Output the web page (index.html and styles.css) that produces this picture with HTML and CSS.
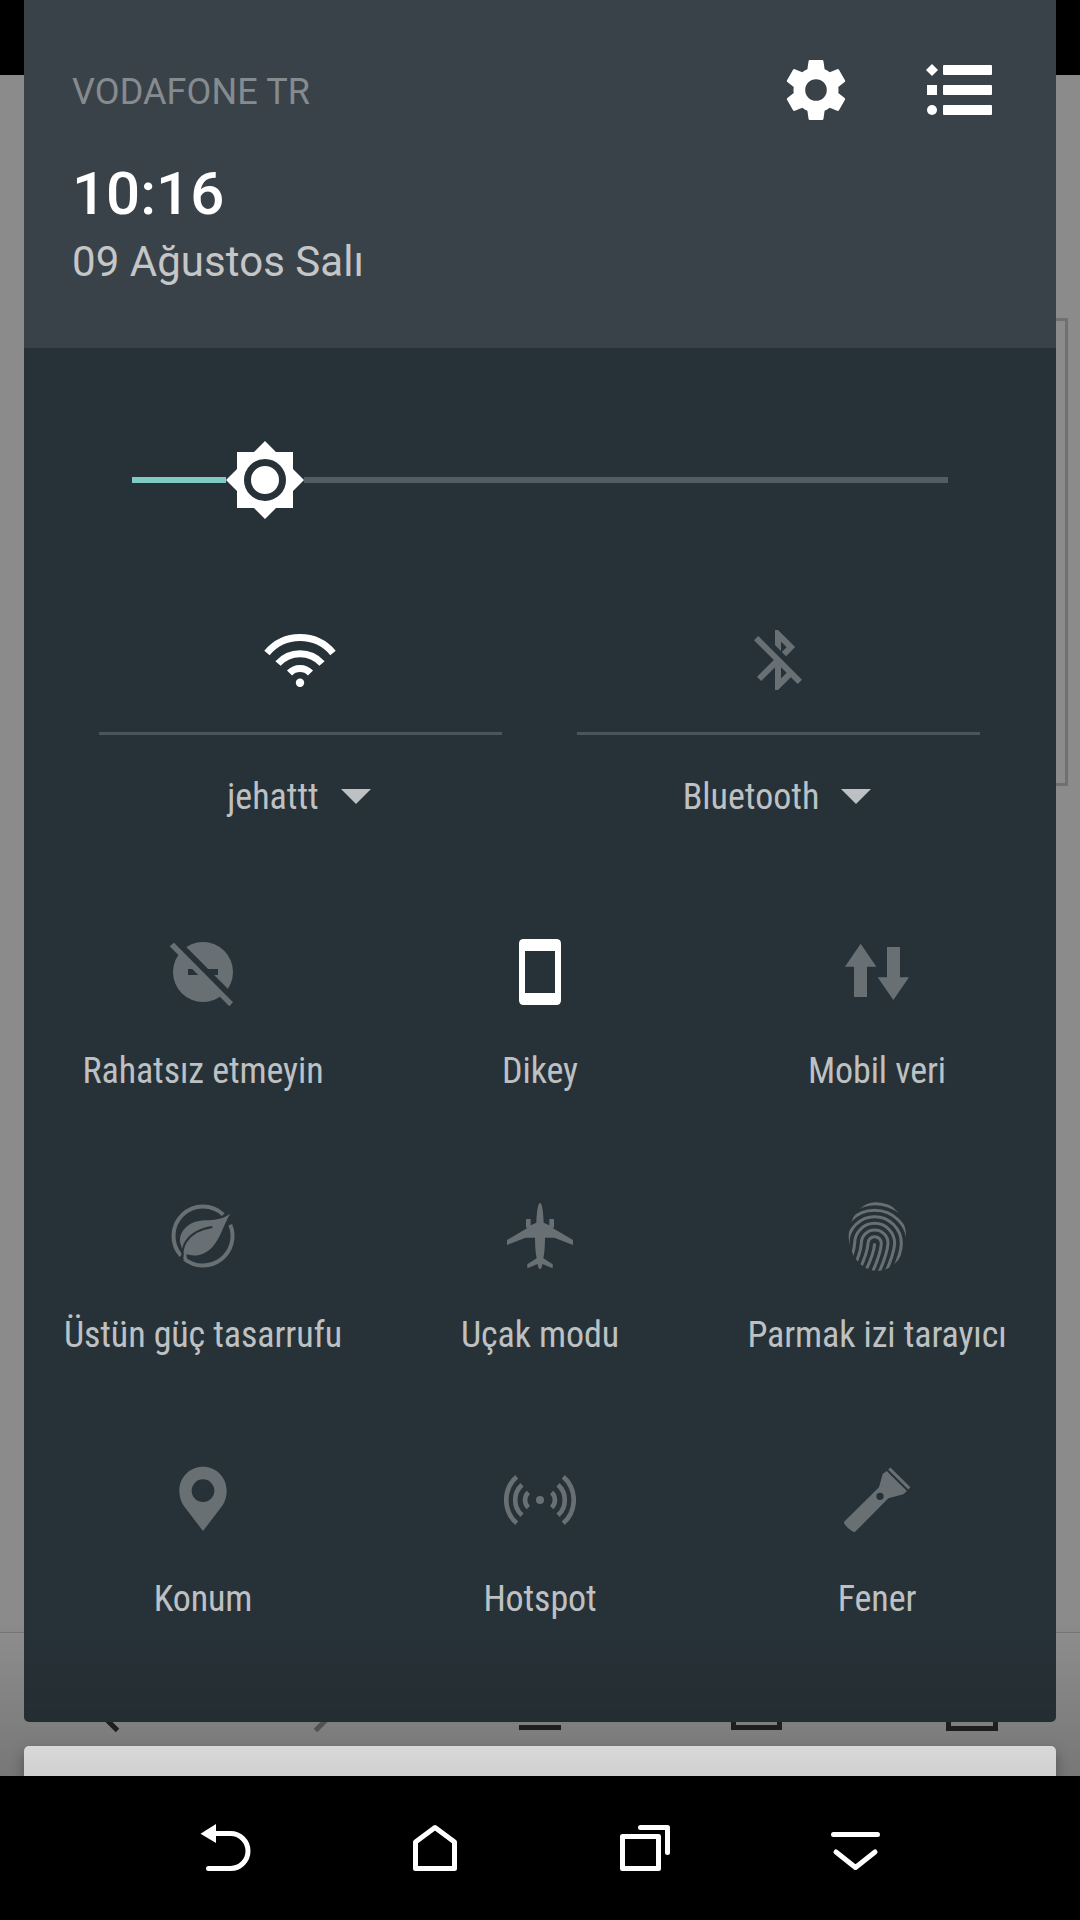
FILE: index.html
```
<!DOCTYPE html>
<html lang="tr">
<head>
  <meta charset="UTF-8" />
  <title>Hızlı Ayarlar</title>
  <meta name="viewport" content="width=1080"/>
  <link rel="stylesheet" href="styles.css">
</head>
<body>
  <div class="screen">
    <!-- dimmed browser behind the shade -->
    <div class="app">
      <div class="app-status"></div>
      <div class="app-page">
        <div class="app-frame"></div>
      </div>
      <div class="app-toolbar">
        <svg viewBox="0 0 1080 143">
          <g fill="none" stroke="#222" stroke-width="5">
            <path d="M117.500 97.500L92 72L117.500 46"/>
            <path d="M315.500 97.500L341 72L315.500 46" stroke="#5c5c5c"/>
            <path d="M519 94.500h42M519 72h42M519 50h42"/>
            <path d="M733.500 46h46v48.500h-46z"/>
            <path d="M948.500 46h47v49.500h-47z"/>
          </g>
        </svg>
      </div>
    </div>

    <div class="shade">
      <div class="panel">
        <div class="header">
          <div class="header-top">
            <span class="carrier">VODAFONE TR</span>
            <div class="header-icons">
              <svg class="icon" viewBox="0 0 24 24"><path d="M19.430 12.980c.04-.32.07-.64.07-.98s-.03-.66-.07-.98l2.110-1.650c.19-.15.24-.42.12-.64l-2-3.460c-.12-.22-.39-.3-.61-.22l-2.490 1c-.52-.4-1.080-.73-1.690-.98l-.38-2.650C14.460 2.180 14.250 2 14 2h-4c-.25 0-.46.18-.49.42l-.38 2.650c-.61.25-1.170.59-1.690.98l-2.490-1c-.23-.09-.49 0-.61.22l-2 3.460c-.13.22-.07.49.12.64l2.110 1.650c-.04.32-.07.65-.07.98s.03.66.07.98l-2.110 1.650c-.19.15-.24.42-.12.64l2 3.460c.12.22.39.3.61.22l2.490-1c.52.4 1.080.73 1.690.98l.38 2.650c.03.24.24.42.49.42h4c.25 0 .46-.18.49-.42l.38-2.650c.61-.25 1.170-.59 1.690-.98l2.490 1c.23.09.49 0 .61-.22l2-3.460c.12-.22.07-.49-.12-.64l-2.110-1.650zM12 15.600a3.600 3.600 0 1 1 0-7.200 3.600 3.600 0 0 1 0 7.200z"/></svg>
              <svg class="icon" viewBox="0 0 72 72">
                <path d="M8 10l6 6-6 6-6-6z"/>
                <path d="M3 31h10v10H3z"/>
                <circle cx="8" cy="56" r="5"/>
                <rect x="19" y="11" width="49" height="10" rx="1"/>
                <rect x="19" y="31" width="49" height="10" rx="1"/>
                <rect x="19" y="51" width="49" height="10" rx="1"/>
              </svg>
            </div>
          </div>
          <div class="clock">10:16</div>
          <div class="date">09 Ağustos Salı</div>
        </div>

        <div class="slider">
          <div class="slider-fill"></div>
          <svg class="slider-thumb" viewBox="0 0 78 78">
            <path fill="#fff" d="M39 0l11 11h17v17l11 11-11 11v17H50L39 78 28 67H11V50L0 39l11-11V11h17z"/>
            <circle cx="39" cy="39" r="17.500" fill="#fff" stroke="#273238" stroke-width="7"/>
          </svg>
          <div class="slider-rest"></div>
        </div>

        <div class="wide-tiles">
          <div class="wide-tile">
            <svg class="icon" viewBox="0 0 72 72">
              <g fill="none" stroke="#fff" stroke-width="7">
                <path d="M3 29A43 43 0 0 1 69 29"/>
                <path d="M14 39.500A29.500 29.500 0 0 1 58 39.500"/>
                <path d="M25.500 49A14.500 14.500 0 0 1 46.500 49"/>
              </g>
              <circle cx="36" cy="58.700" r="4.200"/>
            </svg>
            <div class="wide-label"><span class="label">jehattt</span><i class="caret"></i></div>
          </div>
          <div class="wide-tile">
            <svg class="icon off" viewBox="0 0 24 24"><path d="M13 5.830l1.880 1.880-1.600 1.600 1.410 1.410 3.020-3.020L12 2h-1v5.030l2 2v-3.200zM5.410 4L4 5.410 10.590 12 5 17.590 6.410 19 11 14.410V22h1l4.290-4.290 2.300 2.290L20 18.590 5.410 4zM13 18.170v-3.760l1.880 1.880L13 18.170z"/></svg>
            <div class="wide-label"><span class="label">Bluetooth</span><i class="caret"></i></div>
          </div>
        </div>

        <div class="tiles">
          <div class="tile">
            <svg class="icon off" viewBox="0 0 216 216">
              <circle cx="108" cy="108" r="90"/>
              <path fill="#273238" d="M63 99h90v18H63z"/>
              <path d="M27 38L206 218" transform="translate(0 -22)" stroke="#273238" stroke-width="20"/>
              <path d="M8 31l13-11 177 179-11 12z"/>
            </svg>
            <span class="label">Rahatsız etmeyin</span>
          </div>
          <div class="tile">
            <svg class="icon" viewBox="0 0 216 216"><path fill-rule="evenodd" d="M59 9h98q14 0 14 14v170q0 14-14 14H59q-14 0-14-14V23q0-14 14-14zM63 45v126h90V45z"/></svg>
            <span class="label">Dikey</span>
          </div>
          <div class="tile">
            <svg class="icon off" viewBox="0 0 216 216"><path d="M59 23l47 69H78v91H39V92H12zM138 33h39v91h27l-47 68-47-68h28z"/></svg>
            <span class="label">Mobil veri</span>
          </div>

          <div class="tile">
            <svg class="icon off" viewBox="0 0 216 216">
              <path class="line" stroke-width="12" d="M42.200 167.200A88.500 88.500 0 0 1 168.900 43.800M189.800 74.100A88.500 88.500 0 0 1 52.300 176.800"/>
              <path d="M190 41C160 63 135 58 100 62C60 67 33 100 40 130L45 146L50 160L49 178L60 176L58 163C90 172 115 162 134 143C160 117 170 72 190 41z"/>
              <path fill="none" stroke="#273238" stroke-width="6" d="M136 81C95 87 70 105 57 125C47 140 46 152 45 172"/>
            </svg>
            <span class="label">Üstün güç tasarrufu</span>
          </div>
          <div class="tile">
            <svg class="icon off" viewBox="0 0 216 216"><path d="M108 8C115 10 118 40 119 68L136 76V57H150V80L147 85L207 120V135L151 113H123C123 140 121 160 118 175L146 193V205L115 192Q113 207 108 207Q103 207 101 192L70 205V193L98 175C95 160 93 140 93 113H65L9 135V120L69 85L66 80V57H80V76L97 68C98 40 101 10 108 8z"/></svg>
            <span class="label">Uçak modu</span>
          </div>
          <div class="tile">
            <svg class="icon off" viewBox="0 0 216 216">
              <clipPath id="finger"><ellipse cx="109" cy="109" rx="86" ry="104"/></clipPath>
              <g class="line" stroke-width="9" clip-path="url(#finger)">
                <path d="M101 130q-2 30-26 80"/>
                <path d="M55 210q24-50 26-80a20 20 0 0 1 40 0q-2 30-26 85"/>
                <path d="M35 210q24-50 26-80a40 40 0 0 1 80 0q-2 30-26 85"/>
                <path d="M15 210q24-50 26-80a60 60 0 0 1 120 0q-2 30-26 85"/>
                <path d="M5 190q14-30 16-60a80 80 0 0 1 160 0q0 30-26 85"/>
                <path d="M1 130a100 99 0 0 1 200 0"/>
                <path d="M30 36Q101-14 178 36"/>
              </g>
            </svg>
            <span class="label">Parmak izi tarayıcı</span>
          </div>

          <div class="tile">
            <svg class="icon off" viewBox="0 0 216 216"><path fill-rule="evenodd" d="M108 8C68 8 37 40 37 80c0 18 5 32 12 44l59 77 59-77c7-12 12-26 12-44C179 40 148 8 108 8zM108 46a34 34 0 1 1 0 68 34 34 0 0 1 0-68z"/></svg>
            <span class="label">Konum</span>
          </div>
          <div class="tile">
            <svg class="icon off" viewBox="0 0 216 216">
              <circle cx="108" cy="108" r="12"/>
              <g class="line" stroke-width="14">
                <path d="M38 38A94 94 0 0 0 38 178M54 62A62 62 0 0 0 54 154M73 85A32 32 0 0 0 73 131"/>
                <path d="M178 38A94 94 0 0 1 178 178M162 62A62 62 0 0 1 162 154M143 85A32 32 0 0 1 143 131"/>
              </g>
            </svg>
            <span class="label">Hotspot</span>
          </div>
          <div class="tile">
            <svg class="icon off" viewBox="0 0 216 216">
              <path fill-rule="evenodd" d="M137 21L198 81L187 91L142 103L44 202Q40 206 34 202Q18 192 10 179Q8 175 11 172L114 70L125 30zM117 86a11 11 0 1 0 0 22 11 11 0 0 0 0-22z"/>
              <path class="line" stroke-width="9" d="M145 14L205 73"/>
            </svg>
            <span class="label">Fener</span>
          </div>
        </div>
      </div>

      <div class="card"></div>
    </div>

    <div class="scrim"></div>

    <div class="navbar">
      <div class="nav-btn">
        <svg viewBox="0 0 60 60"><path class="solid" d="M5.500 15.700L21 6v19z"/><path d="M20 15.500h15.500a17.500 17.500 0 0 1 0 35H13.500"/></svg>
      </div>
      <div class="nav-btn">
        <svg viewBox="0 0 60 60"><path d="M10.500 50.500V24L30 9.500 49.500 24v26.500z"/></svg>
      </div>
      <div class="nav-btn">
        <svg viewBox="0 0 60 60"><path d="M7.500 18.500h36v32h-36zM25.500 9.500h27v25"/></svg>
      </div>
      <div class="nav-btn">
        <svg viewBox="0 0 60 60"><path d="M8.500 16.500h44M11 34l19.500 15.500L50 34"/></svg>
      </div>
    </div>
  </div>
</body>
</html>
```
FILE: styles.css
```
body {
  margin: 0;
  padding: 0;
  background: #000;
  color: #fff;
  font-family: Roboto, "Noto Sans", sans-serif;
}
.screen {
  position: relative;
  width: 1080px;
  height: 1920px;
  overflow: hidden;
  display: flex;
  flex-direction: column;
}
.app {
  height: 1776px;
  display: flex;
  flex-direction: column;
  background: #8b8b8b;
}
.app-status {
  height: 75px;
  background: #000;
}
.app-page {
  flex: 1;
  padding: 243px 12px 0 40px;
}
.app-frame {
  height: 462px;
  border: 3px solid #707070;
}
.app-toolbar {
  height: 143px;
  background: #8e8e8e;
  border-top: 1px solid #767676;
}
.app-toolbar svg {
  display: block;
}

/* notification shade lies over the app */
.shade {
  position: absolute;
  top: 0;
  left: 24px;
  width: 1032px;
  height: 1776px;
  display: flex;
  flex-direction: column;
  gap: 24px;
}
.panel {
  height: 1722px;
  background: #273238;
  border-radius: 0 0 5px 5px;
  overflow: hidden;
}
.header {
  box-sizing: border-box;
  height: 348px;
  padding: 54px 60px 0 48px;
  background: #3a4249;
}
.header-top {
  display: flex;
  justify-content: space-between;
  align-items: center;
}
.carrier {
  margin-top: 4px;
  font-size: 36px;
  line-height: 42px;
  letter-spacing: 0.1px;
  color: #868b8f;
}
.header-icons {
  display: flex;
  gap: 72px;
}
.icon {
  display: block;
  width: 72px;
  height: 72px;
  fill: #fff;
}
.icon.off {
  fill: #697073;
}
.icon .line {
  fill: none;
  stroke: #697073;
}
.clock {
  margin-top: 33px;
  font-size: 60px;
  line-height: 70px;
  font-weight: 500;
}
.date {
  margin-top: 8px;
  font-size: 42px;
  line-height: 49px;
  letter-spacing: 0.05px;
  color: #c4c6c8;
}
.slider {
  display: flex;
  align-items: center;
  padding: 93px 108px 0;
}
.slider-fill {
  width: 94px;
  height: 6px;
  background: #80cbc4;
}
.slider-thumb {
  width: 78px;
  height: 78px;
}
.slider-rest {
  flex: 1;
  height: 6px;
  background: #525c62;
}
.wide-tiles {
  display: flex;
  gap: 75px;
  padding: 105px 76px 0 75px;
}
.wide-tile {
  flex: 1;
  display: flex;
  flex-direction: column;
  align-items: center;
}
.wide-tile .icon {
  margin-right: 2px;
}
.wide-label {
  box-sizing: border-box;
  width: 100%;
  margin-top: 36px;
  padding: 41px 3px 0 0;
  border-top: 3px solid #4a555b;
  display: flex;
  justify-content: center;
  align-items: center;
}
.label {
  font-size: 36px;
  line-height: 42px;
  font-stretch: 75%;
  letter-spacing: -0.1px;
  color: #bec1c3;
  white-space: nowrap;
}
.wide-label .label {
  letter-spacing: 0;
}
.caret {
  margin: 0 0 2px 22px;
  border: 15px solid transparent;
  border-top-color: #bec1c3;
  border-bottom: 0;
}
.tiles {
  display: grid;
  grid-template-columns: repeat(3, 337px);
  justify-content: center;
  row-gap: 108px;
  padding-top: 118px;
}
.tile {
  display: flex;
  flex-direction: column;
  align-items: center;
  gap: 42px;
}
.card {
  height: 30px;
  background: #f8f8f8;
  border-radius: 5px 5px 0 0;
  box-shadow: 0 6px 14px rgba(0, 0, 0, 0.35);
}
.scrim {
  position: absolute;
  left: 0;
  top: 1620px;
  width: 100%;
  height: 156px;
  background: linear-gradient(rgba(0, 0, 0, 0), rgba(0, 0, 0, 0.16));
}
.navbar {
  position: relative;
  height: 144px;
  padding: 0 120px;
  background: #000;
  display: flex;
}
.nav-btn {
  flex: 1;
  display: flex;
  justify-content: center;
  align-items: center;
}
.nav-btn svg {
  width: 60px;
  height: 60px;
  fill: none;
  stroke: #fff;
  stroke-width: 5;
  stroke-linecap: round;
  stroke-linejoin: round;
}
.nav-btn .solid {
  fill: #fff;
  stroke: none;
}
```
